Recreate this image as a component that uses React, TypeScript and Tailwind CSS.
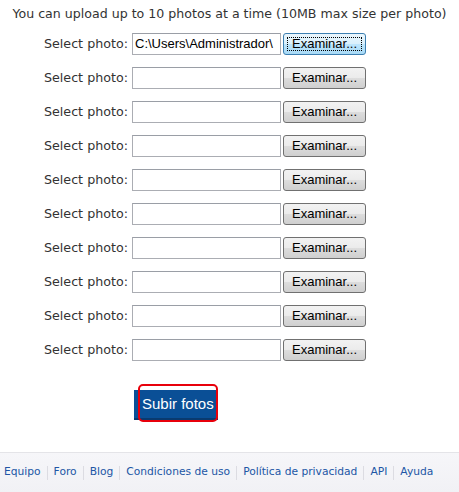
import React from "react";

const rows = Array.from({ length: 10 }, (_, i) => (i === 0 ? "C:\\Users\\Administrador\\" : ""));

const footerLinks = [
	"Equipo",
	"Foro",
	"Blog",
	"Condiciones de uso",
	"Política de privacidad",
	"API",
	"Ayuda",
];

const verdana = "font-['DejaVu_Sans',Verdana,sans-serif]";
const arial = "font-['Liberation_Sans',Arial,sans-serif]";

function FileRow({ value, focused }: { value: string; focused: boolean }) {
	return (
		<div className="flex items-center h-[22px]">
			<label className={`w-[128px] text-right text-[12.7px] text-[#333] ${verdana}`}>
				Select photo:
			</label>
			<div
				className={`ml-[4px] w-[149px] h-[22px] border border-[#abadb3] border-t-[#9a9ea6] bg-white overflow-hidden whitespace-nowrap pl-[2px] leading-[20px] text-[13px] text-black ${arial}`}
			>
				{value}
			</div>
			{focused ? (
				<button className="ml-[2px] w-[83px] h-[22px] rounded-[3px] border border-[#3c7fb1] bg-[linear-gradient(#eaf6fd_0%,#d9f0fc_50%,#bee6fd_51%,#a7d9f5_100%)] p-[3px] cursor-default">
					<span
						className={`flex h-full items-center justify-center border border-dotted border-black text-[13px] text-black ${arial}`}
					>
						Examinar...
					</span>
				</button>
			) : (
				<button
					className={`ml-[2px] w-[83px] h-[22px] rounded-[3px] border border-[#707070] bg-[linear-gradient(#f2f2f2_0%,#ebebeb_50%,#dddddd_51%,#cfcfcf_100%)] text-[13px] text-black cursor-default ${arial}`}
				>
					Examinar...
				</button>
			)}
		</div>
	);
}

export default function App() {
	return (
		<div className="w-[459px] h-[492px] bg-white flex flex-col overflow-hidden">
			<p className={`pt-[6px] text-center text-[12.6px] leading-[16px] text-[#333] ${verdana}`}>
				You can upload up to 10 photos at a time (10MB max size per photo)
			</p>

			<div className="mt-[11px] flex flex-col gap-[12px]">
				{rows.map((value, i) => (
					<FileRow key={i} value={value} focused={i === 0} />
				))}
			</div>

			<div className="mt-[29px] ml-[134px] relative w-[84px] h-[30px]">
				<button
					className={`w-[84px] h-[30px] bg-[#0a4f96] border-b-2 border-[#083a70] text-white text-[15px] pl-[8px] text-left ${arial}`}
				>
					Subir fotos
				</button>
				{/* highlight ring drawn over the button */}
				<div className="absolute left-[4px] top-[-6px] w-[80px] h-[38px] rounded-[5px] border-2 border-[#e8000b] pointer-events-none" />
			</div>

			<div className="mt-auto h-[40px] border-t border-[#e4e4e8] bg-[linear-gradient(#f6f6f9,#f1f1f5)] flex items-center pl-[4px]">
				{footerLinks.map((link, i) => (
					<React.Fragment key={link}>
						{i > 0 && <span className="mx-[6px] h-[14px] w-px bg-[#dcdce2]" />}
						<a className={`text-[10.7px] text-[#2156a5] ${verdana}`}>{link}</a>
					</React.Fragment>
				))}
			</div>
		</div>
	);
}
